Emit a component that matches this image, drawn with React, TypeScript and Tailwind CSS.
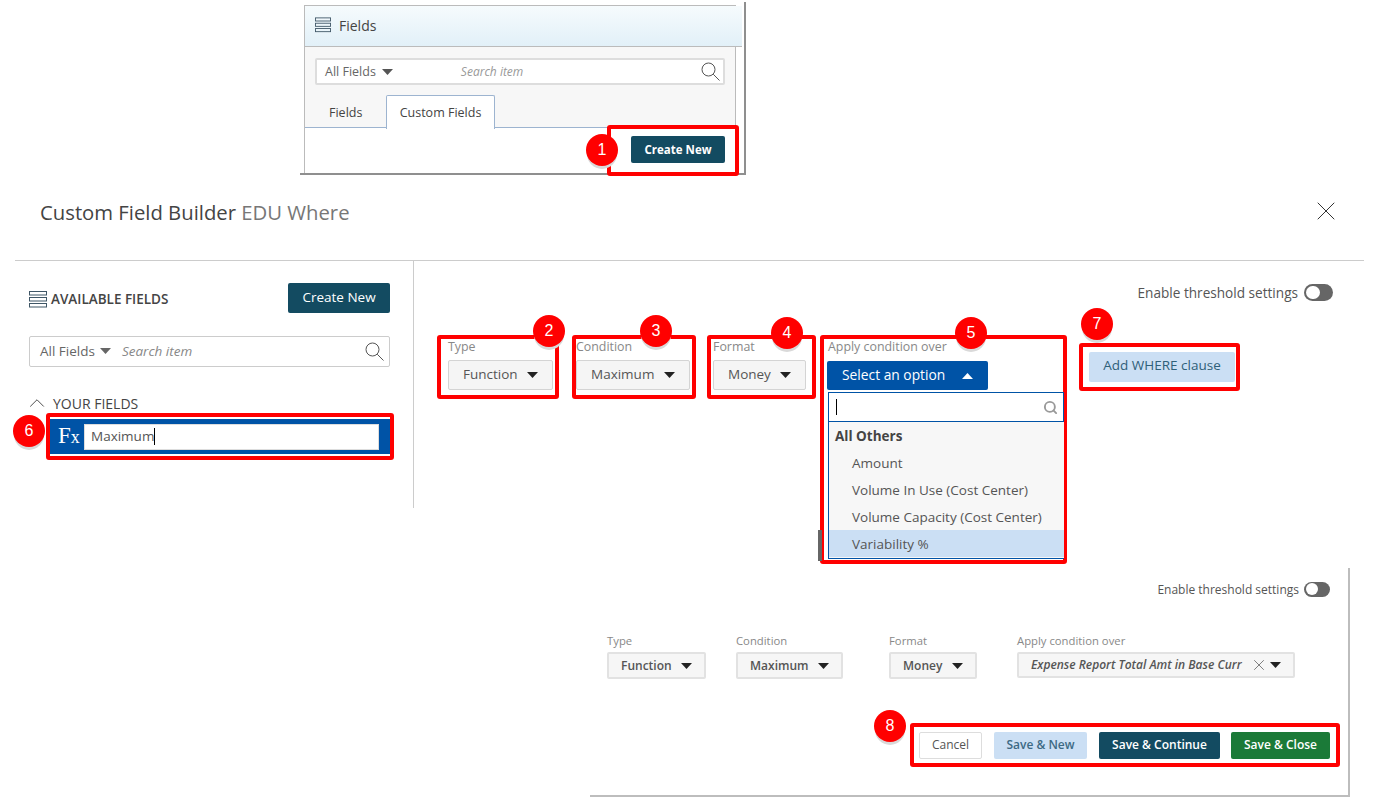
import { ChevronUp, Search, X } from "lucide-react";

function Badge({ n, className }: { n: number; className: string }) {
  return (
    <span
      className={`absolute z-10 flex h-[32px] w-[32px] items-center justify-center rounded-full bg-[#f00] font-['Liberation_Sans',sans-serif] text-[16px] text-white shadow-[0_4px_0_-1px_#d9d9d9] ${className}`}
    >
      {n}
    </span>
  );
}

function Caret({ up, className = "" }: { up?: boolean; className?: string }) {
  return (
    <svg width="11" height="6" viewBox="0 0 11 6" className={`shrink-0 ${className}`}>
      <path d={up ? "M0 6 L5.5 0 L11 6 Z" : "M0 0 L11 0 L5.5 6 Z"} fill="currentColor" />
    </svg>
  );
}

function LinesIcon({ className = "" }: { className?: string }) {
  return (
    <svg width="18" height="17" viewBox="0 0 18 17" fill="none" stroke="#3f5666" className={`shrink-0 ${className}`}>
      <rect x="0.5" y="0.5" width="17" height="3.5" />
      <rect x="0.5" y="6.5" width="17" height="3.5" />
      <rect x="0.5" y="12.5" width="17" height="3.5" />
    </svg>
  );
}

function ThinSearch() {
  return (
    <svg width="19" height="19" viewBox="0 0 19 19" fill="none" stroke="#555" className="shrink-0">
      <circle cx="7.5" cy="7.5" r="6.5" />
      <path d="M12.2 12.2 L18.5 18.5" />
    </svg>
  );
}

function Toggle({ className = "" }: { className?: string }) {
  return (
    <span className={`flex items-center rounded-full bg-[#666] pl-[2px] ${className}`}>
      <span className="h-[80%] aspect-square rounded-full bg-white" />
    </span>
  );
}

function GraySelect({ label, className }: { label: string; className: string }) {
  return (
    <div className={`flex h-[30px] items-center justify-between rounded-[2px] border border-[#d4d4d4] bg-[#f5f5f5] pl-[14px] pr-[14px] text-[13.5px] text-[#555] ${className}`}>
      <span className="pb-[1px]">{label}</span>
      <Caret className="text-[#222]" />
    </div>
  );
}

function SmallField({ label, value, className }: { label: string; value: string; className: string }) {
  return (
    <div className={className}>
      <div className="h-[19px] text-[11.3px] leading-[15px] text-[#888]">{label}</div>
      <div className="flex h-[27px] items-center justify-between rounded-[2px] border-2 border-[#e2e2e2] bg-[#f6f6f6] pl-[12px] pr-[12px] text-[12px] font-semibold text-[#555]">
        {value}
        <Caret className="text-[#222]" />
      </div>
    </div>
  );
}

export default function App() {
  return (
    <div className="relative h-[808px] w-[1376px] overflow-hidden bg-white font-['Open_Sans',sans-serif]">
      {/* step 1 screenshot */}
      <div className="relative ml-[300px] mt-[2px] h-[173px] w-[446px] border-b-2 border-r-2 border-[#8f8f8f] pl-[4px] pt-[3px]">
        <div className="h-[168px] w-[432px] border-l border-t border-[#bbb]">
          <div className="flex h-[41px] w-[437px] items-center gap-[8px] border-b border-[#bbb] bg-gradient-to-b from-[#f6fbfd] to-[#e2f0f8] pb-[2px] pl-[10px] text-[14px] text-[#444]">
            <LinesIcon className="h-[16px] w-[16px]" />
            Fields
          </div>
          <div className="h-[81px] w-[431px] border-b border-r border-b-[#9db4d0] border-r-[#bbb] bg-[#f7f7f7] pl-[10px] pt-[11px]">
            <div className="flex h-[27px] w-[410px] items-center rounded-[2px] border-2 border-[#ddd] bg-white pl-[8px] pr-[3px] text-[12.5px] text-[#666]">
              <span className="pt-[1px]">All Fields</span>
              <Caret className="ml-[6px] text-[#555]" />
              <span className="ml-[68px] flex-1 text-[12px] italic text-[#999]">Search item</span>
              <ThinSearch />
            </div>
            <div className="mt-[10px] flex h-[34px] items-stretch pt-[2px] text-[12.5px] text-[#444]">
              <span className="flex w-[71px] items-center pl-[14px]">Fields</span>
              <span className="mt-[-2px] flex w-[109px] items-center justify-center rounded-t-[2px] border border-b-0 border-[#9db4d0] bg-white pt-[2px]">
                Custom Fields
              </span>
            </div>
          </div>
          <div className="h-[45px] w-[431px] border-r border-[#bbb]" />
        </div>
        <div className="absolute left-[307px] top-[123px] flex h-[51px] w-[132px] items-center justify-end rounded-[3px] border-4 border-[#f00] pb-[2px] pr-[10px]">
          <Badge n={1} className="left-[-25px] top-[5px]" />
          <button className="flex h-[27px] w-[94px] items-center justify-center rounded-[2px] bg-[#134b61] text-[11.5px] font-bold text-white">
            Create New
          </button>
        </div>
      </div>

      {/* builder dialog */}
      <div className="mx-[12px] mt-[2px] w-[1352px] pl-[3px]">
        <div className="flex h-[84px] items-start justify-between border-b border-[#ccc] pl-[25px] pr-[22px] pt-[20px]">
          <h1 className="text-[20.3px] leading-[30px] text-[#444]">
            Custom Field Builder <span className="text-[#777]">EDU Where</span>
          </h1>
          <X size={32} strokeWidth={0.75} className="mt-[-2px] text-[#333]" />
        </div>
        <div className="flex h-[247px]">
          <div className="w-[399px] border-r border-[#ccc] pl-[14px] pr-[23px]">
            <div className="mt-[22px] flex h-[30px] items-center justify-between">
              <div className="flex items-center gap-[4px] pt-[3px] text-[13.5px] font-semibold text-[#444]">
                <LinesIcon />
                AVAILABLE FIELDS
              </div>
              <button className="h-[30px] w-[102px] rounded-[2px] bg-[#134b61] pb-[2px] text-[13.5px] text-white">Create New</button>
            </div>
            <div className="mt-[23px] flex h-[31px] items-center rounded-[2px] border border-[#ccc] pb-[1px] pl-[10px] pr-[5px] text-[13.5px] text-[#666]">
              All Fields
              <Caret className="ml-[5px] text-[#666]" />
              <span className="ml-[11px] flex-1 text-[13.5px] italic text-[#888]">Search item</span>
              <ThinSearch />
            </div>
            <div className="mt-[28px] flex h-[18px] items-center pb-[2px] text-[14px] text-[#444]">
              <ChevronUp size={26} strokeWidth={0.8} className="ml-[-5px] mr-[3px] text-[#333]" />
              YOUR FIELDS
            </div>
            <div className="relative ml-[17px] h-[47px] w-[348px] rounded-[3px] border-4 border-[#f00] py-[2px]">
              <Badge n={6} className="left-[-37px] top-[-2px]" />
              <div className="flex h-[35px] items-center bg-[#0053a6] pl-[8px] pr-[11px]">
                <span className="w-[26px] whitespace-nowrap pb-[3px] font-['Liberation_Serif',serif] leading-none text-white">
                  <span className="text-[23px]">F</span>
                  <span className="text-[18px]">x</span>
                </span>
                <div className="flex h-[26px] flex-1 items-center border border-[#ddd] bg-white pl-[6px] text-[13.5px] text-[#555]">
                  Maximum<span className="h-[17px] w-px bg-black" />
                </div>
              </div>
            </div>
          </div>
          <div className="flex-1">
            <div className="mt-[23px] flex h-[17px] items-center justify-end gap-[6px] pr-[31px] text-[13.6px] text-[#555]">
              <span className="pt-[2px]">Enable threshold settings</span>
              <Toggle className="h-[17px] w-[29px]" />
            </div>
            <div className="ml-[23px] mt-[34px] flex items-start">
              <div className="relative h-[64px] w-[122px] rounded-[3px] border-4 border-[#f00] pl-[7px] pt-[1px]">
                <Badge n={2} className="right-[-10px] top-[-24px]" />
                <div className="h-[20px] text-[12.4px] leading-[14px] text-[#888]">Type</div>
                <GraySelect label="Function" className="w-[105px]" />
              </div>
              <div className="relative ml-[13px] h-[64px] w-[124px] rounded-[3px] border-4 border-[#f00] pt-[1px]">
                <Badge n={3} className="left-[64px] top-[-24px]" />
                <div className="h-[20px] text-[12.4px] leading-[14px] text-[#888]">Condition</div>
                <GraySelect label="Maximum" className="w-[114px]" />
              </div>
              <div className="relative ml-[11px] h-[64px] w-[109px] rounded-[3px] border-4 border-[#f00] pl-[2px] pt-[1px]">
                <Badge n={4} className="left-[60px] top-[-22px]" />
                <div className="h-[20px] text-[12.4px] leading-[14px] text-[#888]">Format</div>
                <GraySelect label="Money" className="w-[93px]" />
              </div>
              <div className="relative ml-[4px] h-[229px] w-[247px] rounded-[3px] border-4 border-[#f00] pl-[3px] pt-[2px]">
                <Badge n={5} className="left-[131px] top-[-22px]" />
                <span className="absolute bottom-[-1px] left-[-6px] h-[31px] w-[4px] bg-[#666]" />
                <div className="h-[20px] pl-[1px] text-[12.4px] leading-[12px] text-[#888]">Apply condition over</div>
                <div className="flex h-[29px] w-[161px] items-center justify-between rounded-[2px] bg-[#0053a6] pl-[15px] pr-[15px] text-[13.8px] text-white">
                  <span className="pb-[1px]">Select an option</span>
                  <Caret up />
                </div>
                <div className="ml-[1px] mt-[2px] h-[167px] w-[236px] border border-r-0 border-[#0053a6] bg-[#f7f7f7] text-[13.5px] text-[#555]">
                  <div className="flex h-[29px] items-center justify-between border-b border-r border-[#0053a6] bg-white pl-[7px] pr-[5px]">
                    <span className="h-[16px] w-px bg-black" />
                    <Search size={15} strokeWidth={3} className="text-[#999]" />
                  </div>
                  <div className="flex h-[27px] items-center pl-[6px] pt-[1px] font-bold text-[#444]">All Others</div>
                  <div className="flex h-[27px] items-center pl-[23px] pt-[1px]">Amount</div>
                  <div className="flex h-[27px] items-center pl-[23px] pt-[1px]">Volume In Use (Cost Center)</div>
                  <div className="flex h-[27px] items-center pl-[23px] pt-[1px]">Volume Capacity (Cost Center)</div>
                  <div className="flex h-[27px] items-center bg-[#cbdff4] pl-[23px] pt-[1px]">Variability %</div>
                </div>
              </div>
              <div className="relative ml-[12px] mt-[8px] flex h-[48px] w-[161px] items-center rounded-[3px] border-4 border-[#f00] pb-[1px] pl-[6px]">
                <Badge n={7} className="left-[-2px] top-[-39px]" />
                <button className="h-[30px] w-[146px] rounded-[2px] bg-[#cbdff4] pb-[2px] text-[13.5px] text-[#2f6079]">Add WHERE clause</button>
              </div>
            </div>
          </div>
        </div>
      </div>

      {/* saved state screenshot */}
      <div className="ml-[590px] mt-[60px] h-[229px] w-[760px] border-b-2 border-r-2 border-[#bdbdbd] pt-[13px]">
        <div className="flex h-[16px] items-center justify-end gap-[5px] pr-[18px] text-[12px] text-[#555]">
          <span className="pt-[2px]">Enable threshold settings</span>
          <Toggle className="h-[15px] w-[26px]" />
        </div>
        <div className="ml-[17px] mt-[36px] flex items-start">
          <SmallField label="Type" value="Function" className="w-[99px]" />
          <SmallField label="Condition" value="Maximum" className="ml-[30px] w-[107px]" />
          <SmallField label="Format" value="Money" className="ml-[46px] w-[88px]" />
          <div className="ml-[40px] w-[278px]">
            <div className="h-[19px] text-[11.3px] leading-[15px] text-[#888]">Apply condition over</div>
            <div className="flex h-[26px] items-center rounded-[2px] border-2 border-[#e2e2e2] bg-[#f6f6f6] pl-[12px] pr-[12px] text-[12px] font-semibold italic text-[#555]">
              <span className="flex-1 whitespace-nowrap">Expense Report Total Amt in Base Curr</span>
              <X size={18} strokeWidth={1} className="mr-[2px] text-[#555]" />
              <Caret className="text-[#222]" />
            </div>
          </div>
        </div>
        <div className="relative ml-[320px] mt-[44px] flex h-[44px] w-[430px] items-center gap-[12px] rounded-[3px] border-4 border-[#f00] pl-[5px] text-[12px]">
          <Badge n={8} className="left-[-40px] top-[-17px]" />
          <button className="h-[27px] w-[63px] rounded-[2px] border border-[#ddd] bg-white text-[#555]">Cancel</button>
          <button className="h-[27px] w-[93px] rounded-[2px] bg-[#cbdff4] font-semibold text-[#3d6a84]">Save &amp; New</button>
          <button className="h-[27px] w-[121px] rounded-[2px] bg-[#134b61] font-semibold text-white">Save &amp; Continue</button>
          <button className="ml-[-1px] h-[27px] w-[99px] rounded-[2px] bg-[#1b7a38] font-semibold text-white">Save &amp; Close</button>
        </div>
      </div>
    </div>
  );
}
